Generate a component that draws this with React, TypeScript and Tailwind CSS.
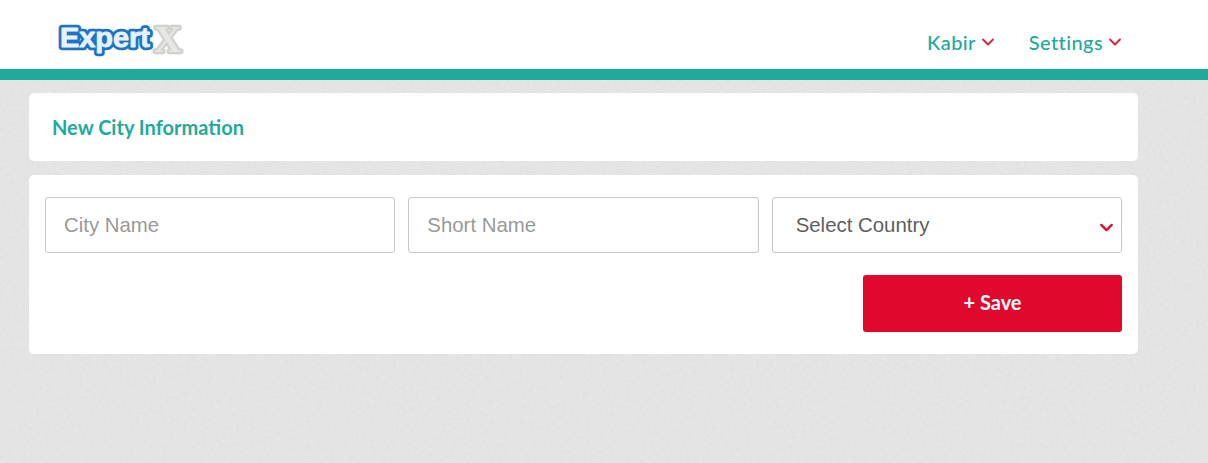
import { ChevronDown } from "lucide-react";

const NavItem = ({ label }: { label: string }) => (
    <div className="flex items-center gap-[2px]">
        <span className="text-[20px] font-medium leading-none tracking-[0.4px] text-[#1fa99b]">{label}</span>
        <ChevronDown size={20} strokeWidth={2.2} className="text-[#d81e3f]" />
    </div>
);

const Logo = () => (
    <svg width="140" height="50" viewBox="0 0 140 50" className="font-['Liberation_Sans',sans-serif] font-bold">
        <text x="6" y="29" fontSize="28" textLength="90" lengthAdjust="spacingAndGlyphs" fill="#1b74c4" stroke="#1b74c4" strokeWidth="6.5" strokeLinejoin="round">
            Expert
        </text>
        <text x="6" y="29" fontSize="28" textLength="90" lengthAdjust="spacingAndGlyphs" fill="#e8f1fa" stroke="#e8f1fa" strokeWidth="0.9" strokeLinejoin="round">
            Expert
        </text>
        <text x="100" y="34" fontSize="38" fill="#e6e6e6" stroke="#cfd2cc" strokeWidth="4.5" strokeLinejoin="round" paintOrder="stroke fill" className="font-['Liberation_Serif',serif]">
            X
        </text>
    </svg>
);

const inputClass =
    "h-[56px] w-full rounded-[3px] border border-[#c8c8c8] bg-white pl-[18px] text-[20.4px] text-[#555] placeholder:text-[#999] font-['Liberation_Sans',sans-serif] outline-none";

export default function App() {
    return (
        <div className="relative h-[463px] overflow-hidden bg-[#e6e6e6] font-['Lato',sans-serif]">
            {/* paper grain behind the page */}
            <svg className="absolute inset-0 h-full w-full" aria-hidden="true">
                <filter id="grain">
                    <feTurbulence type="fractalNoise" baseFrequency="0.3" numOctaves="2" seed="4" />
                    <feColorMatrix values="0 0 0 0 0.5  0 0 0 0 0.5  0 0 0 0 0.5  0 0 0 0.2 -0.05" />
                </filter>
                <rect width="100%" height="100%" filter="url(#grain)" />
            </svg>

            <div className="relative">
                <header className="flex h-[80px] items-center justify-between border-b-[11px] border-[#1fab9b] bg-white pl-[54px] pr-[83px]">
                    <div className="flex h-[69px] items-center pt-[17px]">
                        <Logo />
                    </div>
                    <nav className="flex items-center gap-[31px] pt-[14px]">
                        <NavItem label="Kabir" />
                        <NavItem label="Settings" />
                    </nav>
                </header>

                <main className="ml-[29px] mt-[13px] flex w-[1109px] flex-col gap-[14px]">
                    <section className="flex h-[68px] items-center rounded-[5px] bg-white px-[23px]">
                        <h1 className="text-[20px] font-bold text-[#1fab9b]">New City Information</h1>
                    </section>

                    <section className="flex h-[179px] flex-col rounded-[5px] bg-white px-[16px] pt-[22px]">
                        <div className="grid grid-cols-3 gap-[13px]">
                            <input className={inputClass} placeholder="City Name" />
                            <input className={inputClass} placeholder="Short Name" />
                            <div className="relative">
                                <div className="flex h-[56px] items-center rounded-[3px] border border-[#c8c8c8] bg-white pl-[23px] text-[20.4px] text-[#5e5e5e] font-['Liberation_Sans',sans-serif]">
                                    Select Country
                                </div>
                                <ChevronDown size={21} strokeWidth={2.6} className="absolute right-[5px] top-[20px] text-[#e0082c]" />
                            </div>
                        </div>
                        <div className="mt-[22px] flex justify-end">
                            <button className="h-[57px] w-[259px] rounded-[3px] bg-[#e0082c] pb-[3px] text-[20px] font-bold text-white">
                                + Save
                            </button>
                        </div>
                    </section>
                </main>
            </div>
        </div>
    );
}
